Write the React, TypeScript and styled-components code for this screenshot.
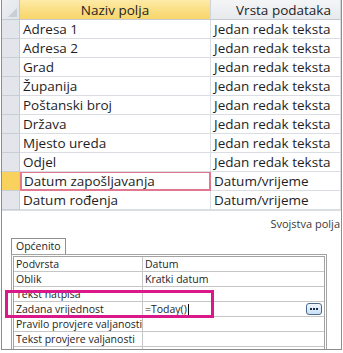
import styled, { createGlobalStyle } from "styled-components";

const GlobalStyle = createGlobalStyle`
  html, body {
    margin: 0;
    padding: 0;
    background: #ffffff;
  }
  body {
    font-family: "Open Sans", "Noto Sans", sans-serif;
    color: #1e1e1e;
  }
`;

const fields = [
  { name: "Adresa 1", type: "Jedan redak teksta" },
  { name: "Adresa 2", type: "Jedan redak teksta" },
  { name: "Grad", type: "Jedan redak teksta" },
  { name: "Županija", type: "Jedan redak teksta" },
  { name: "Poštanski broj", type: "Jedan redak teksta" },
  { name: "Država", type: "Jedan redak teksta" },
  { name: "Mjesto ureda", type: "Jedan redak teksta" },
  { name: "Odjel", type: "Jedan redak teksta" },
  { name: "Datum zapošljavanja", type: "Datum/vrijeme", current: true },
  { name: "Datum rođenja", type: "Datum/vrijeme" },
];

const properties = [
  { label: "Podvrsta", value: "Datum" },
  { label: "Oblik", value: "Kratki datum" },
  { label: "Tekst natpisa", value: "" },
  { label: "Zadana vrijednost", value: "=Today()", editing: true },
  { label: "Pravilo provjere valjanosti", value: "" },
  { label: "Tekst provjere valjanosti", value: "" },
  { label: "Obavezno", value: "Ne" },
];

const Screen = styled.div`
  position: relative;
  width: 343px;
  height: 353px;
  overflow: hidden;
`;

const Window = styled.div`
  margin-left: 1px;
  width: 339px;
  height: 349px;
  overflow: hidden;
  border-left: 1px solid #8d8d8d;
  border-right: 1px solid #8d8d8d;
  border-bottom: 1px solid #8d8d8d;
  display: flex;
  flex-direction: column;

  & > * {
    flex-shrink: 0;
  }
`;

const Grid = styled.div`
  display: grid;
  grid-template-columns: 18px 191px 1fr;
  grid-auto-rows: 19px;
  grid-template-rows: 20px;
  font-size: 13.5px;
`;

const Corner = styled.div`
  background: linear-gradient(135deg, #eef0f3 0%, #dfe3e8 100%);
  border-right: 1px solid #c5cad2;
  border-bottom: 1px solid #c5cad2;
  position: relative;

  &::after {
    content: "";
    position: absolute;
    right: 2px;
    bottom: 2px;
    border-left: 9px solid transparent;
    border-bottom: 9px solid #c9ced6;
  }
`;

const HeaderCell = styled.div<{ $selected?: boolean }>`
  display: flex;
  align-items: center;
  justify-content: center;
  padding-left: ${(p) => (p.$selected ? "0" : "16px")};
  white-space: nowrap;
  overflow: hidden;
  border-right: 1px solid #d0d4da;
  border-bottom: 1px solid #c5cad2;
  background: ${(p) =>
    p.$selected
      ? "linear-gradient(#fdeba8 0%, #fbe08a 45%, #f8d66a 100%)"
      : "linear-gradient(#f4f5f7 0%, #e7e9ec 100%)"};
  color: #1e1e1e;
`;

const Selector = styled.div<{ $current?: boolean }>`
  background: ${(p) => (p.$current ? "#f8d25c" : "#e2e5ea")};
  border-right: 1px solid #c5cad2;
  border-bottom: 1px solid #c9ced6;
`;

const Cell = styled.div<{ $current?: boolean }>`
  display: flex;
  align-items: center;
  padding-left: 3px;
  white-space: nowrap;
  overflow: hidden;
  border-right: 1px solid #dadde2;
  border-bottom: 1px solid #dadde2;
  ${(p) =>
    p.$current &&
    `
    border: 2px solid #e07890;
    border-top-width: 1px;
    padding-left: 2px;
  `}
`;

const PanelTitle = styled.div`
  display: flex;
  justify-content: flex-end;
  height: 24px;
  align-items: center;
  font-size: 11px;
  color: #3a3a3a;
  padding-right: 1px;
  border-top: 1px solid #dadde2;
`;

const PropertyArea = styled.div`
  padding-left: 9px;
  padding-top: 3px;
  display: flex;
  flex-direction: column;
  position: relative;
`;

const Tab = styled.div`
  align-self: flex-start;
  height: 15px;
  padding: 0 4px;
  font-size: 10.5px;
  line-height: 15px;
  border: 1px solid #8f8f8f;
  border-bottom: none;
  background: #ffffff;
`;

const PropertyTable = styled.div`
  width: 310px;
  border: 3px double #a3a3a3;
  border-bottom: none;
  display: grid;
  grid-template-columns: 129px 1fr;
  grid-auto-rows: 15px;
  font-size: 10.5px;
`;

const PropLabel = styled.div`
  display: flex;
  align-items: center;
  padding-left: 2px;
  white-space: nowrap;
  overflow: hidden;
  border-right: 1px solid #c6c6c6;
  border-bottom: 1px solid #c6c6c6;
`;

const PropValue = styled.div`
  display: flex;
  align-items: center;
  justify-content: space-between;
  padding-left: 2px;
  white-space: nowrap;
  border-bottom: 1px solid #c6c6c6;
`;

const Caret = styled.span`
  display: inline-block;
  width: 1px;
  height: 12px;
  background: #111;
  margin-left: 1px;
  vertical-align: middle;
`;

const EllipsisButton = styled.div`
  width: 14px;
  height: 10px;
  margin-right: 2px;
  border: 1px solid #4c6a8c;
  border-radius: 3px;
  background: linear-gradient(#f0f7fd, #c9e0f5);
  display: flex;
  align-items: center;
  justify-content: center;
  gap: 1px;
`;

const Dot = styled.span`
  width: 2px;
  height: 2px;
  background: #1b2f4d;
`;

const Highlight = styled.div`
  position: absolute;
  left: 3px;
  top: 55px;
  width: 203px;
  height: 22px;
  border: 3px solid #d9198a;
  pointer-events: none;
`;

export default function App() {
  return (
    <Screen>
      <GlobalStyle />
      <Window>
        <Grid>
          <Corner />
          <HeaderCell $selected>Naziv polja</HeaderCell>
          <HeaderCell>Vrsta podataka</HeaderCell>
          {fields.map((f) => (
            <>
              <Selector key={f.name + "-s"} $current={f.current} />
              <Cell key={f.name} $current={f.current}>
                {f.name}
              </Cell>
              <Cell key={f.name + "-t"}>{f.type}</Cell>
            </>
          ))}
        </Grid>
        <PanelTitle>Svojstva polja</PanelTitle>
        <PropertyArea>
          <Tab>Općenito</Tab>
          <PropertyTable>
            {properties.map((p) => (
              <>
                <PropLabel key={p.label}>{p.label}</PropLabel>
                <PropValue key={p.label + "-v"}>
                  <span>
                    {p.value}
                    {p.editing && <Caret />}
                  </span>
                  {p.editing && (
                    <EllipsisButton>
                      <Dot />
                      <Dot />
                      <Dot />
                    </EllipsisButton>
                  )}
                </PropValue>
              </>
            ))}
          </PropertyTable>
          <Highlight />
        </PropertyArea>
      </Window>
    </Screen>
  );
}
